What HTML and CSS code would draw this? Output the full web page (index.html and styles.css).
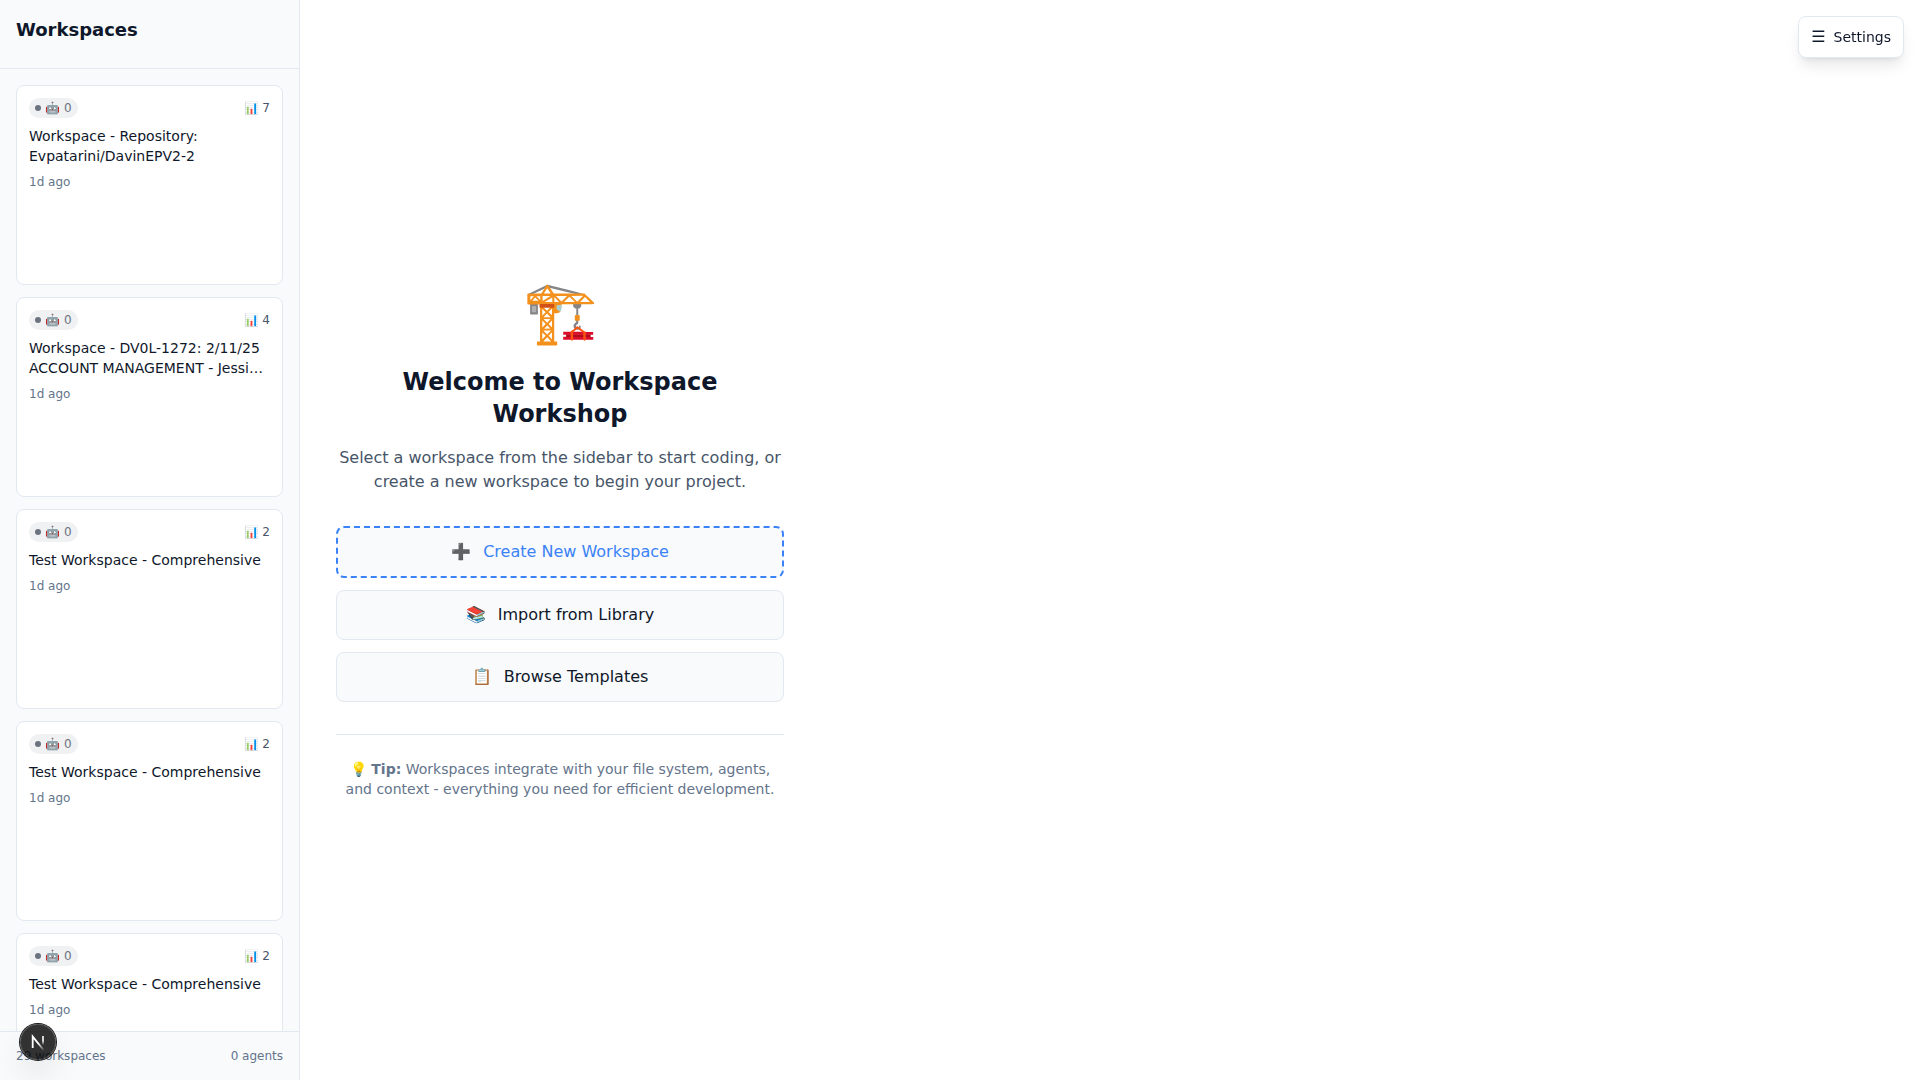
FILE: index.html
```html
<!DOCTYPE html>
<html lang="en">
<head>
  <meta charset="utf-8">
  <meta name="viewport" content="width=device-width, initial-scale=1">
  <title>Workspace Workshop</title>
  <link rel="stylesheet" href="styles.css">
</head>
<body>
  <div class="app">
    <aside class="sidebar">
      <header class="sidebar-header">
        <h1 class="sidebar-title">Workspaces</h1>
      </header>
      <div class="workspace-list">
        <article class="card">
          <div class="card-top">
            <span class="badge"><span class="dot"></span><span>🤖</span><span>0</span></span>
            <span class="count">📊 7</span>
          </div>
          <h2 class="card-title">Workspace - Repository: Evpatarini/DavinEPV2-2</h2>
          <p class="card-time">1d ago</p>
        </article>
        <article class="card">
          <div class="card-top">
            <span class="badge"><span class="dot"></span><span>🤖</span><span>0</span></span>
            <span class="count">📊 4</span>
          </div>
          <h2 class="card-title">Workspace - DV0L-1272: 2/11/25 ACCOUNT MANAGEMENT - Jessi…</h2>
          <p class="card-time">1d ago</p>
        </article>
        <article class="card">
          <div class="card-top">
            <span class="badge"><span class="dot"></span><span>🤖</span><span>0</span></span>
            <span class="count">📊 2</span>
          </div>
          <h2 class="card-title">Test Workspace - Comprehensive</h2>
          <p class="card-time">1d ago</p>
        </article>
        <article class="card">
          <div class="card-top">
            <span class="badge"><span class="dot"></span><span>🤖</span><span>0</span></span>
            <span class="count">📊 2</span>
          </div>
          <h2 class="card-title">Test Workspace - Comprehensive</h2>
          <p class="card-time">1d ago</p>
        </article>
        <article class="card">
          <div class="card-top">
            <span class="badge"><span class="dot"></span><span>🤖</span><span>0</span></span>
            <span class="count">📊 2</span>
          </div>
          <h2 class="card-title">Test Workspace - Comprehensive</h2>
          <p class="card-time">1d ago</p>
        </article>
      </div>
      <footer class="sidebar-footer">
        <span>29 workspaces</span>
        <span>0 agents</span>
      </footer>
    </aside>

    <main class="main">
      <section class="welcome">
        <div class="welcome-icon">🏗️</div>
        <h2 class="welcome-title">Welcome to Workspace Workshop</h2>
        <p class="welcome-text">Select a workspace from the sidebar to start coding, or create a new workspace to begin your project.</p>
        <div class="actions">
          <button class="action action-primary" type="button"><span>➕</span><span>Create New Workspace</span></button>
          <button class="action" type="button"><span>📚</span><span>Import from Library</span></button>
          <button class="action" type="button"><span>📋</span><span>Browse Templates</span></button>
        </div>
        <p class="tip">💡 <strong>Tip:</strong> Workspaces integrate with your file system, agents, and context - everything you need for efficient development.</p>
      </section>
    </main>
  </div>

  <button class="settings" type="button"><span class="settings-icon">☰</span><span>Settings</span></button>

  <button class="dev-badge" type="button" aria-label="Open developer tools">
    <svg width="40" height="40" viewBox="0 0 40 40" fill="none" aria-hidden="true">
      <defs>
        <linearGradient id="stem" x1="26" y1="13" x2="26" y2="23" gradientUnits="userSpaceOnUse">
          <stop stop-color="#fff"/>
          <stop offset="0.6" stop-color="#fff"/>
          <stop offset="1" stop-color="#fff" stop-opacity="0"/>
        </linearGradient>
        <linearGradient id="diagonal" x1="21" y1="21" x2="27" y2="28" gradientUnits="userSpaceOnUse">
          <stop stop-color="#fff"/>
          <stop offset="1" stop-color="#fff" stop-opacity="0"/>
        </linearGradient>
      </defs>
      <path d="M14.7 26V14.6L25.6 28" stroke="url(#diagonal)" stroke-width="1.8"/>
      <path d="M25 14v10" stroke="url(#stem)" stroke-width="1.6"/>
    </svg>
  </button>
</body>
</html>
```
FILE: styles.css
```css
*,
*::before,
*::after {
  box-sizing: border-box;
}

body,
h1,
h2,
p {
  margin: 0;
}

body {
  font-family: "DejaVu Sans", sans-serif;
  font-size: 16px;
  line-height: 24px;
  color: #0f172a;
  background: #fff;
}

button {
  font: inherit;
  color: inherit;
  cursor: pointer;
}

.app {
  display: flex;
  height: 100vh;
}

/* Sidebar */

.sidebar {
  display: flex;
  flex-direction: column;
  flex: none;
  width: 300px;
  background: #f8fafc;
  border-right: 1px solid #e2e8f0;
}

.sidebar-header {
  padding: 16px 16px 24px;
  border-bottom: 1px solid #e2e8f0;
}

.sidebar-title {
  font-size: 18px;
  line-height: 28px;
  font-weight: 600;
}

.workspace-list {
  display: flex;
  flex-direction: column;
  gap: 12px;
  flex: 1;
  min-height: 0;
  padding: 16px;
  overflow-y: auto;
  scrollbar-width: none;
}

.card {
  flex: none;
  min-height: 200px;
  padding: 12px;
  background: #fff;
  border: 1px solid #e2e8f0;
  border-radius: 8px;
}

.card-top {
  display: flex;
  align-items: center;
  justify-content: space-between;
  margin-bottom: 8px;
  font-size: 12px;
  line-height: 16px;
}

.badge {
  display: flex;
  align-items: center;
  gap: 4px;
  padding: 2px 6px;
  color: #6b7280;
  background: #f0f1f2;
  border-radius: 10px;
}

.dot {
  width: 6px;
  height: 6px;
  background: #6b7280;
  border-radius: 50%;
}

.count {
  color: #475569;
}

.card-title {
  margin-bottom: 8px;
  font-size: 14px;
  line-height: 20px;
  font-weight: 500;
}

.card-time {
  font-size: 12px;
  line-height: 16px;
  color: #64748b;
}

.sidebar-footer {
  display: flex;
  justify-content: space-between;
  padding: 16px;
  font-size: 12px;
  line-height: 16px;
  color: #64748b;
  border-top: 1px solid #e2e8f0;
}

/* Welcome panel */

.main {
  display: flex;
  align-items: center;
  flex: 1;
  padding: 36px;
}

.welcome {
  width: 100%;
  max-width: 448px;
  text-align: center;
}

.welcome-icon {
  margin-bottom: 24px;
  font-size: 60px;
  line-height: 60px;
}

.welcome-title {
  margin-bottom: 16px;
  font-size: 24px;
  line-height: 32px;
  font-weight: 700;
}

.welcome-text {
  margin-bottom: 32px;
  color: #475569;
}

.actions {
  display: flex;
  flex-direction: column;
  gap: 12px;
  margin-bottom: 32px;
}

.action {
  display: flex;
  align-items: center;
  justify-content: center;
  gap: 12px;
  padding: 12px 24px;
  background: #f8fafc;
  border: 1px solid #e2e8f0;
  border-radius: 8px;
}

.action-primary {
  color: #3b82f6;
  border: 2px dashed #3b82f6;
}

.tip {
  padding-top: 24px;
  font-size: 14px;
  line-height: 20px;
  color: #64748b;
  border-top: 1px solid #e2e8f0;
}

/* Floating controls */

.settings {
  position: fixed;
  top: 16px;
  right: 16px;
  display: flex;
  align-items: center;
  gap: 8px;
  padding: 8px 12px;
  font-size: 14px;
  line-height: 20px;
  background: #fff;
  border: 1px solid #e2e8f0;
  border-radius: 8px;
  box-shadow: 0 10px 15px -3px rgba(0, 0, 0, 0.1), 0 4px 6px -4px rgba(0, 0, 0, 0.1);
}

.settings-icon {
  font-size: 16px;
  line-height: 24px;
}

.dev-badge {
  position: fixed;
  left: 20px;
  bottom: 20px;
  display: flex;
  align-items: center;
  justify-content: center;
  width: 36px;
  height: 36px;
  padding: 0;
  background: rgba(0, 0, 0, 0.8);
  border: 0;
  border-radius: 50%;
  box-shadow: 0 0 0 1px #171717, inset 0 0 0 1px rgba(255, 255, 255, 0.14), 0 16px 32px -8px rgba(0, 0, 0, 0.24);
}

.dev-badge svg {
  flex: none;
}
```
